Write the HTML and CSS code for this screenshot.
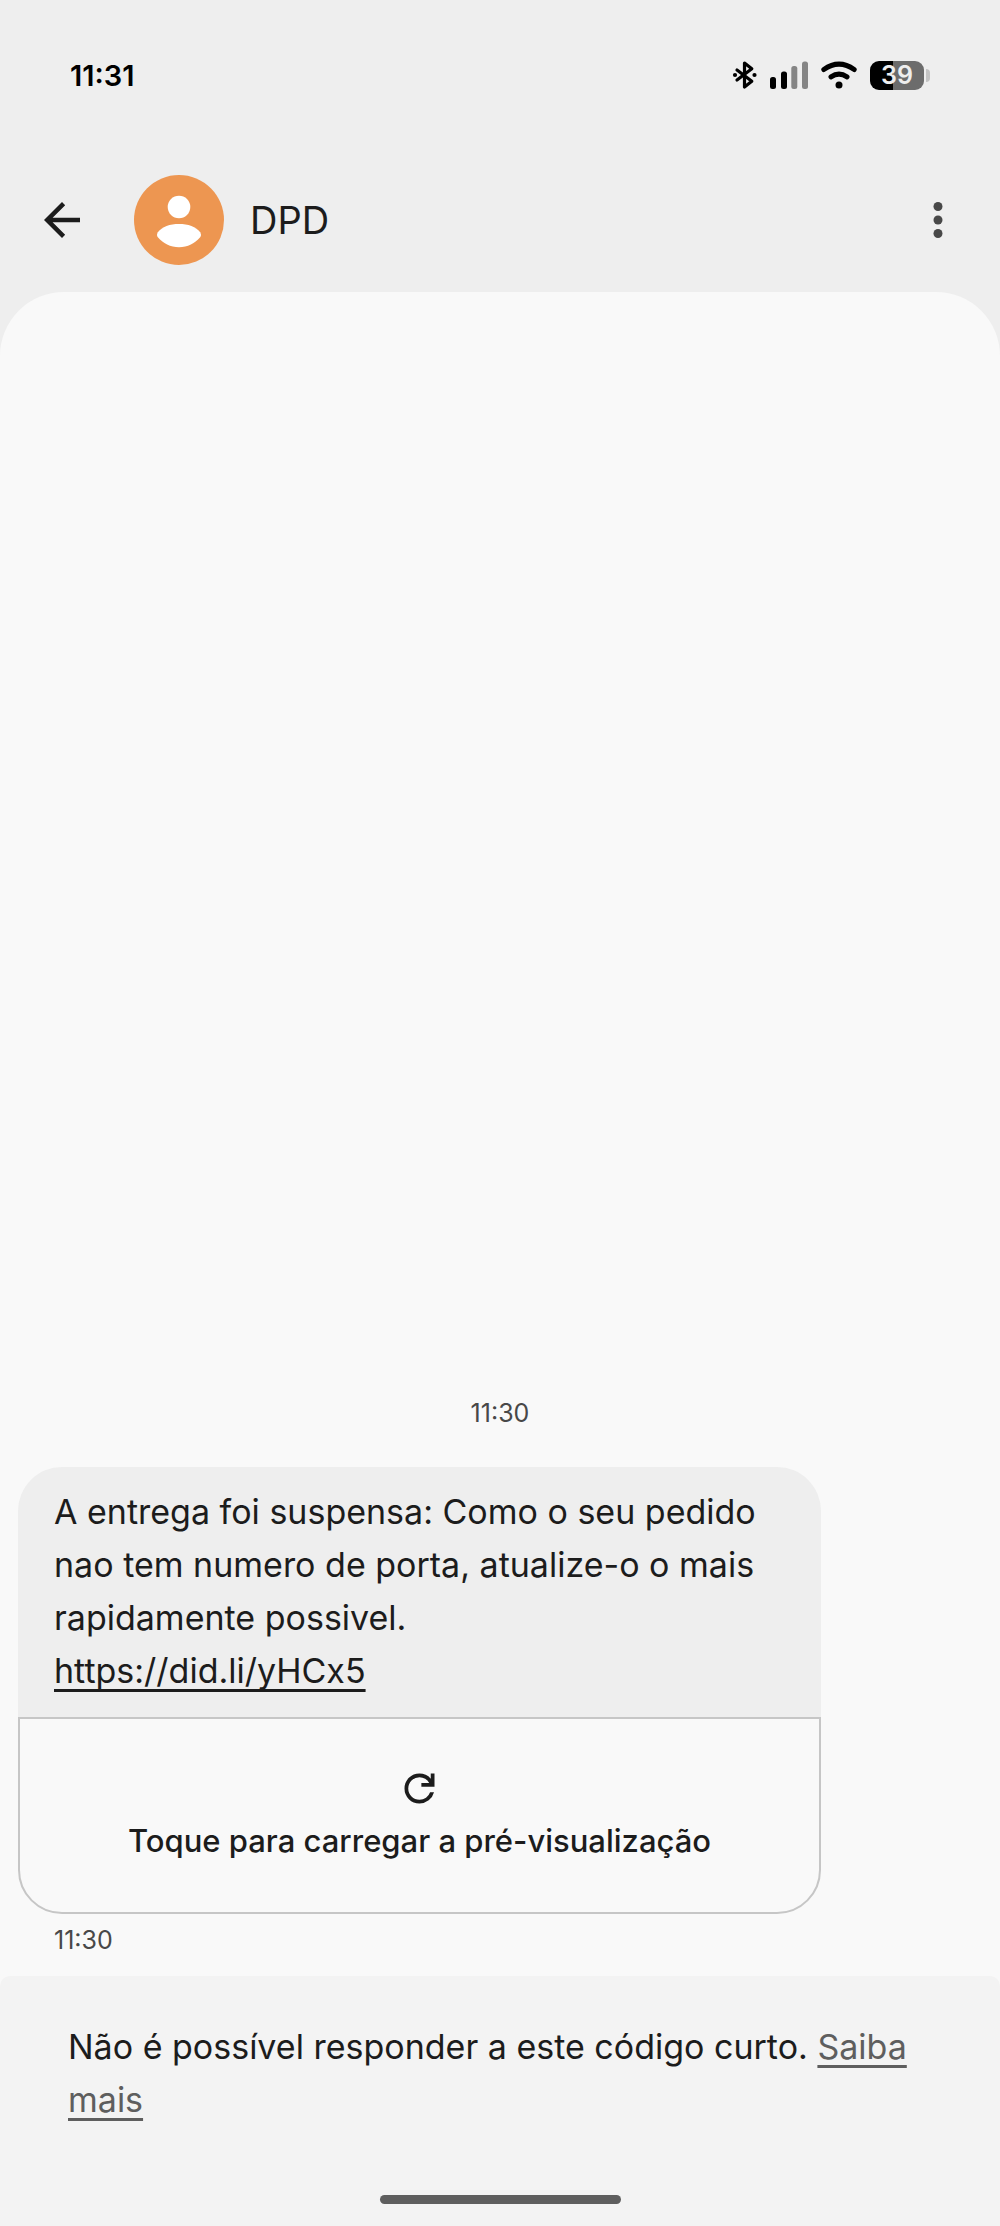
FILE: index.html
```html
<!DOCTYPE html>
<html lang="pt">
<head>
<meta charset="utf-8">
<meta name="viewport" content="width=device-width, initial-scale=1">
<title>DPD</title>
<link rel="stylesheet" href="styles.css">
</head>
<body>
<div class="status-bar">
  <time class="status-time">11:31</time>
  <div class="status-icons">
    <svg width="25" height="30" viewBox="0 0 25 30" aria-hidden="true">
      <path d="M5 10 19.800 21.300 12.500 27V3L19.800 8.700 5 20" fill="none" stroke="#000" stroke-width="3.200" stroke-linejoin="round" stroke-linecap="round"/>
      <circle cx="3" cy="15" r="2.100"/><circle cx="22.500" cy="15" r="2.100"/>
    </svg>
    <svg width="38" height="30" viewBox="0 0 38 30" aria-hidden="true">
      <rect x="0" y="17" width="6" height="12" rx="2.500"/>
      <rect x="11" y="11.500" width="6" height="17.500" rx="2.500"/>
      <rect x="21.300" y="6" width="6" height="23" rx="2.500" fill="#858585"/>
      <rect x="32" y="1.500" width="6" height="27.500" rx="2.500" fill="#858585"/>
    </svg>
    <svg width="36" height="30" viewBox="0 0 36 30" aria-hidden="true">
      <path d="M2.800 9.500Q18-1.200 33.200 9.500M10 16.800Q18 11.500 26 16.800" fill="none" stroke="#000" stroke-width="5" stroke-linecap="round"/>
      <circle cx="18" cy="25" r="3.500"/>
    </svg>
    <div class="battery"><span class="battery-level">39</span><span class="battery-cap"></span></div>
  </div>
</div>

<header class="app-bar">
  <button class="icon-button" type="button" aria-label="Voltar">
    <svg width="54" height="54" viewBox="0 0 24 24" aria-hidden="true"><path d="M20 11H7.830l5.590-5.590L12 4l-8 8 8 8 1.410-1.410L7.830 13H20z" fill="#1c1c1c"/></svg>
  </button>
  <svg class="avatar" width="90" height="90" viewBox="0 0 90 90" aria-hidden="true">
    <circle cx="45" cy="45" r="45" fill="#ed9651"/>
    <circle cx="45" cy="32" r="11.300" fill="#fff"/>
    <path d="M23.600 57.500C28 51.500 36 49 45 49S62 51.500 66.400 57.500Q67.600 59.800 66.400 62C61 68.500 53.500 72.200 45 72.200S29 68.500 23.600 62Q22.400 59.800 23.600 57.500Z" fill="#fff"/>
  </svg>
  <h1 class="contact">DPD</h1>
  <button class="icon-button" type="button" aria-label="Mais opções">
    <svg width="54" height="54" viewBox="0 0 24 24" aria-hidden="true"><g fill="#484848"><circle cx="12" cy="6" r="2"/><circle cx="12" cy="12" r="2"/><circle cx="12" cy="18" r="2"/></g></svg>
  </button>
</header>

<main class="conversation">
  <time class="day-stamp">11:30</time>
  <article class="message">
    <p class="bubble">A entrega foi suspensa: Como o seu pedido nao tem numero de porta, atualize-o o mais rapidamente possivel.<br><a class="link" href="#">https://did.li/yHCx5</a></p>
    <button class="preview" type="button">
      <svg width="45" height="45" viewBox="0 -960 960 960" aria-hidden="true"><path d="M480-160q-134 0-227-93t-93-227q0-134 93-227t227-93q69 0 132 28.500T720-690v-110h80v280H520v-80h168q-32-56-87.500-88T480-720q-100 0-170 70t-70 170q0 100 70 170t170 70q77 0 139-44t87-116h84q-28 106-114 173t-196 67Z" fill="#1c1c1c"/></svg>
      <span>Toque para carregar a pré-visualização</span>
    </button>
    <time class="message-time">11:30</time>
  </article>
</main>

<footer class="notice">
  <p class="notice-text">Não é possível responder a este código curto. <a class="link link-muted" href="#">Saiba mais</a></p>
  <div class="gesture-handle"></div>
</footer>
</body>
</html>
```
FILE: styles.css
```css
* {
  box-sizing: border-box;
}

body {
  display: flex;
  flex-direction: column;
  min-height: 100vh;
  margin: 0;
  background: #eee;
  color: #1c1c1c;
  font-family: Inter, Roboto, sans-serif;
  font-size: 34px;
  line-height: 53px;
}

button {
  padding: 0;
  border: 0;
  background: none;
  color: inherit;
  font: inherit;
  cursor: pointer;
}

svg {
  display: block;
  flex: none;
}

/* System status bar */
.status-bar {
  display: flex;
  align-items: center;
  justify-content: space-between;
  height: 150px;
  padding: 0 70px;
  color: #000;
}

.status-time {
  font-size: 29px;
  font-weight: 600;
}

.status-icons {
  display: flex;
  align-items: center;
  gap: 13px;
}

.battery {
  display: flex;
  align-items: center;
  gap: 2px;
}

.battery-level {
  width: 54px;
  border-radius: 9px;
  background: linear-gradient(to right, #000 42%, #6c6c6c 42%);
  color: #eee;
  font-size: 25px;
  font-weight: 600;
  line-height: 29px;
  text-align: center;
}

.battery-cap {
  width: 4px;
  height: 13px;
  border-radius: 0 4px 4px 0;
  background: #c4c4c4;
}

/* Conversation header */
.app-bar {
  display: flex;
  align-items: center;
  height: 142px;
  padding: 0 35px 2px;
}

.avatar {
  margin: 0 26px 0 45px;
}

.contact {
  flex: 1;
  margin: 0;
  font-size: 38px;
  font-weight: 400;
}

/* Messages */
.conversation {
  display: flex;
  flex: 1;
  flex-direction: column;
  justify-content: flex-end;
  padding: 0 18px 20px;
  border-radius: 64px 64px 0 0;
  background: #f9f9f9;
}

.day-stamp,
.message-time {
  color: #484848;
  font-size: 25px;
  line-height: 32px;
}

.day-stamp {
  margin-bottom: 38px;
  text-align: center;
}

.message {
  display: flex;
  flex-direction: column;
  width: 100%;
  max-width: 803px;
}

.bubble {
  margin: 0;
  padding: 18px 36px 20px;
  border-radius: 44px 44px 0 0;
  background: #eee;
}

.link {
  color: inherit;
  text-decoration: underline 3px;
  text-decoration-skip-ink: none;
  text-underline-offset: 6px;
}

.link-muted {
  color: #5e5e5e;
}

.preview {
  display: flex;
  flex-direction: column;
  align-items: center;
  gap: 10px;
  padding: 47px 36px 51px;
  border: 2px solid #c6c6c6;
  border-radius: 0 0 44px 44px;
  font-size: 31px;
  font-weight: 500;
  line-height: 40px;
}

.message-time {
  margin: 10px 36px 0;
}

/* Short-code notice */
.notice {
  padding: 44px 68px 22px;
  border-radius: 10px 10px 0 0;
  background: #f3f3f3;
  box-shadow: 0 -10px 0 10px #f9f9f9;
  clip-path: inset(-10px 0 0);
}

.notice-text {
  margin: 0 0 69px;
}

.gesture-handle {
  width: 241px;
  height: 9px;
  margin: 0 auto;
  border-radius: 5px;
  background: #5e5e5e;
}
```
